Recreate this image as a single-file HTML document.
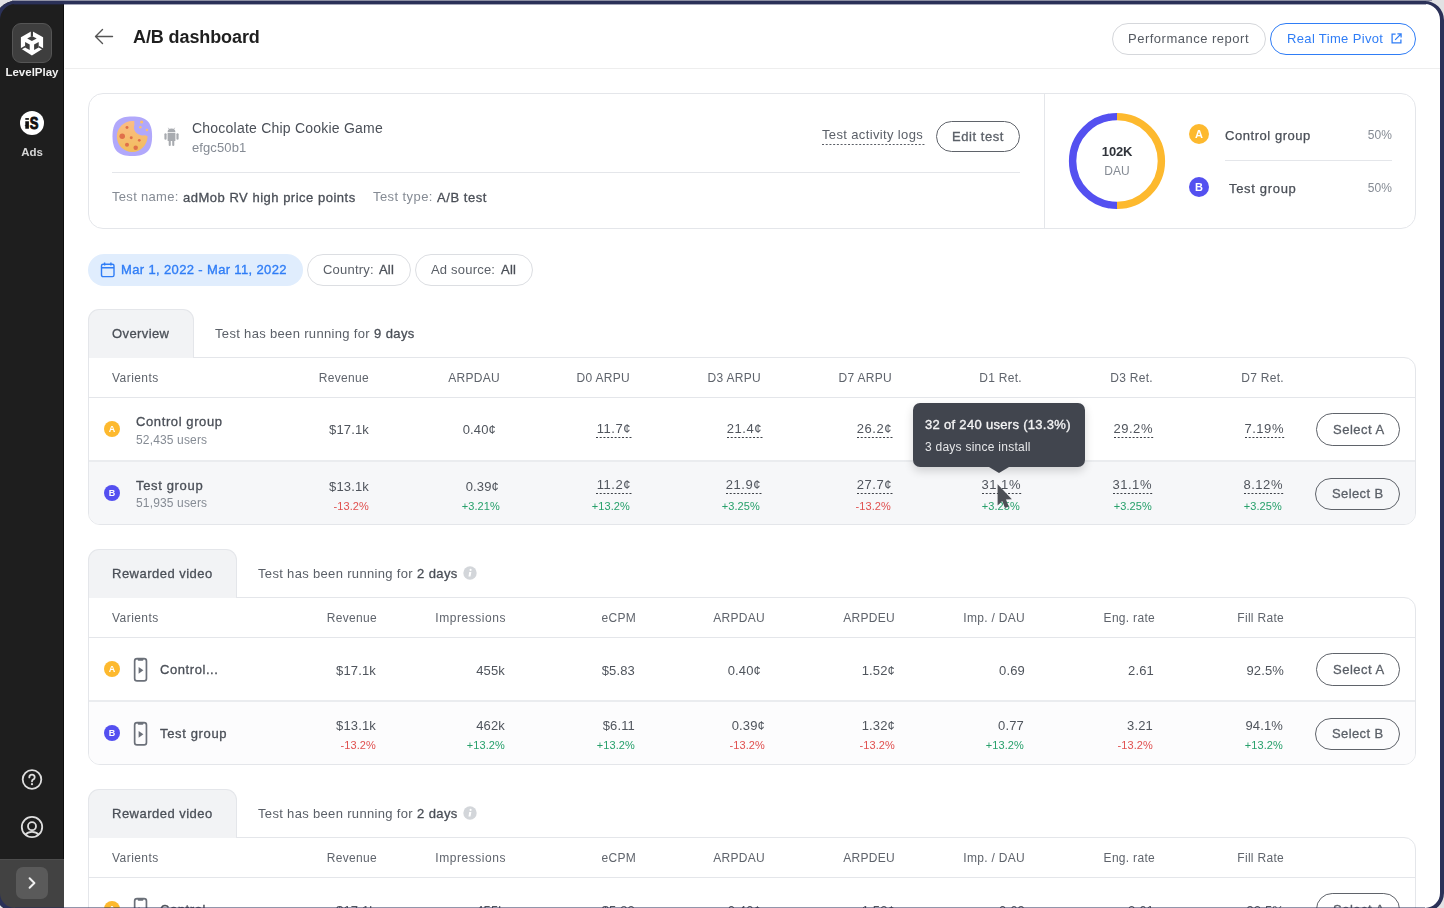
<!DOCTYPE html><html><head><meta charset="utf-8"><style>
html,body{margin:0;padding:0;}
body{width:1444px;height:908px;position:relative;overflow:hidden;background:#fff;font-family:"Liberation Sans", sans-serif;}
.t{position:absolute;white-space:nowrap;line-height:1;will-change:transform;}
.b{position:absolute;box-sizing:border-box;}
svg{position:absolute;overflow:visible;}
</style></head><body>
<div class="b" style="left:0px;top:0px;width:64px;height:908px;background:#1e1e1e;"></div>
<div class="b" style="left:63px;top:0px;width:1px;height:908px;background:#0f0f0f;"></div>
<div class="b" style="left:12px;top:23px;width:40px;height:40px;background:#3e3e3e;border:1px solid #555;border-radius:9px;"></div>
<svg style="left:18px;top:28px" width="28" height="30" viewBox="0 0 28 30">
<path fill="#fff" d="M13.9 3.0 L25.1 9.3 L25.1 20.6 L13.9 27.4 L2.9 20.6 L2.9 9.3 Z"/>
<g fill="#3e3e3e">
<rect x="12.8" y="2" width="2.2" height="6.4"/>
<path d="M13.9 8.1 L18.7 10.6 L13.9 13.0 L9.2 10.6 Z"/>
<path d="M7.1 13.9 L11.7 16.5 L11.7 22.0 L7.1 19.4 Z"/>
<path d="M20.7 13.9 L16.1 16.5 L16.1 22.0 L20.7 19.4 Z"/>
<path d="M2.2 20.4 L7.1 17.7 L7.1 19.4 L3.0 21.7 Z"/>
<path d="M25.6 20.4 L20.7 17.7 L20.7 19.4 L24.8 21.7 Z"/>
</g>
</svg>
<div class="t" style="top:66.77px;font-size:11.5px;font-weight:700;color:#f2f2f2;left:-268.00px;width:600px;text-align:center;">LevelPlay</div>
<div class="b" style="left:20px;top:111px;width:24px;height:24px;border-radius:50%;background:#fff;"></div>
<svg style="left:20px;top:111px" width="24" height="24" viewBox="0 0 24 24">
<g fill="#111">
<rect x="5.3" y="7.1" width="3.6" height="1.7"/>
<path d="M5.3 10.3 L8.9 10.3 L8.9 17.8 L5.3 17.8 L5.3 15.2 L4.6 14.7 L5.3 14.2 Z"/>
</g>
<text x="0" y="0" transform="translate(14.05,18.3) scale(0.8,1)" text-anchor="middle" font-family="Liberation Sans" font-weight="700" font-size="16.3" fill="#111" stroke="#111" stroke-width="0.9">S</text>
</svg>
<div class="t" style="top:146.67px;font-size:11.5px;font-weight:700;color:#d6d6d6;left:-268.00px;width:600px;text-align:center;">Ads</div>
<svg style="left:21px;top:769px" width="22" height="22" viewBox="0 0 22 22">
<circle cx="11" cy="10.5" r="9.3" fill="none" stroke="#dedede" stroke-width="1.8"/>
<path d="M8.3 8.4 Q8.3 5.6 11 5.6 Q13.7 5.6 13.7 8.2 Q13.7 9.8 12 10.6 Q11 11.1 11 12.4" fill="none" stroke="#dedede" stroke-width="1.8" stroke-linecap="round"/>
<circle cx="11" cy="15.2" r="1.1" fill="#dedede"/>
</svg>
<svg style="left:20px;top:815px" width="24" height="24" viewBox="0 0 24 24">
<circle cx="12" cy="12" r="10.2" fill="none" stroke="#dedede" stroke-width="1.8"/>
<circle cx="12" cy="11.2" r="4.0" fill="none" stroke="#dedede" stroke-width="1.8"/>
<path d="M5.0 19.9 Q7.9 16.9 12 16.9 Q16.1 16.9 19.0 19.9" fill="none" stroke="#dedede" stroke-width="1.8"/>
</svg>
<div class="b" style="left:0px;top:859px;width:64px;height:49px;background:#424242;border-top:1px solid #4d4d4d;"></div>
<div class="b" style="left:16px;top:867px;width:32px;height:32px;background:#5a5a5a;border-radius:7px;"></div>
<svg style="left:16px;top:867px" width="32" height="32" viewBox="0 0 32 32">
<path d="M13.6 11.3 L18.4 16 L13.6 20.7" fill="none" stroke="#f0f0f0" stroke-width="2" stroke-linecap="round" stroke-linejoin="round"/>
</svg>
<svg style="left:94px;top:28px" width="20" height="17" viewBox="0 0 20 17">
<path d="M1.5 8.5 L18.5 8.5 M8.5 1.5 L1.5 8.5 L8.5 15.5" fill="none" stroke="#555" stroke-width="1.4" stroke-linecap="round" stroke-linejoin="round"/>
</svg>
<div class="t" style="top:28.26px;font-size:18px;font-weight:700;color:#1f1f1f;letter-spacing:-0.1px;left:132.50px;">A/B dashboard</div>
<div class="b" style="left:65px;top:68px;width:1380px;height:1px;background:#eeeeee;"></div>
<div class="b" style="left:1112px;top:22.5px;width:154px;height:32px;border:1px solid #d5d7db;border-radius:16px;"></div>
<div class="t" style="top:32.00px;font-size:13px;font-weight:400;color:#555a62;letter-spacing:0.5px;left:1128.30px;">Performance report</div>
<div class="b" style="left:1270px;top:22.5px;width:146px;height:32px;border:1px solid #2f7df6;border-radius:16px;"></div>
<div class="t" style="top:31.80px;font-size:13px;font-weight:400;color:#2f7df6;letter-spacing:0.35px;left:1286.50px;">Real Time Pivot</div>
<svg style="left:1390.6px;top:32.6px" width="11" height="11" viewBox="0 0 12 12">
<path d="M5 1.2 L1.2 1.2 L1.2 10.8 L10.8 10.8 L10.8 7" fill="none" stroke="#2f7df6" stroke-width="1.4"/>
<path d="M7 1 L11 1 L11 5 M11 1 L4.5 7.5" fill="none" stroke="#2f7df6" stroke-width="1.4"/>
</svg>
<div class="b" style="left:88px;top:93px;width:1328px;height:136px;border:1px solid #e4e6ea;border-radius:15px;"></div>
<div class="b" style="left:1044px;top:93px;width:1px;height:136px;background:#e4e6ea;"></div>
<svg style="left:111.7px;top:116.3px" width="40.6" height="40.6" viewBox="0 0 40 40">
<path d="M20 0.5 C34 0.5 39.5 6 39.5 20 C39.5 34 34 39.5 20 39.5 C6 39.5 0.5 34 0.5 20 C0.5 6 6 0.5 20 0.5 Z" fill="#b1a8fb"/><g transform="translate(20,20.2) scale(1.045) translate(-20,-20)">
<defs><linearGradient id="ck" x1="0" y1="0" x2="0" y2="1"><stop offset="0" stop-color="#fbbd86"/><stop offset="1" stop-color="#f2bd5c"/></linearGradient></defs>
<path d="M22 5.3 C21.4 7 22.5 8.2 21.8 9.8 C21 11.8 22 15 24 16.8 C26 18.6 29 19.4 31 18.8 C32.8 18.4 34 19.6 34.4 19.8 C34.4 28 28 34.6 20 34.6 C12 34.6 5.4 28 5.4 20 C5.4 12 12 5.3 20 5.3 Z" fill="url(#ck)"/>
<circle cx="10.5" cy="19.8" r="2.6" fill="#e0704a"/><circle cx="15" cy="11.6" r="1.4" fill="#e0704a"/>
<circle cx="19" cy="21.2" r="1.4" fill="#e0704a"/><circle cx="15" cy="27.8" r="1.9" fill="#e0704a"/>
<circle cx="23.2" cy="30.6" r="2.1" fill="#e0704a"/><circle cx="26.6" cy="23.6" r="1.3" fill="#e0704a"/>
<circle cx="28.8" cy="6.3" r="1.5" fill="#fbbe6e"/><circle cx="27.6" cy="11.3" r="1.2" fill="#fbbe6e"/><circle cx="33.8" cy="13.8" r="1.2" fill="#fbbe6e"/>
</g></svg>
<svg style="left:164px;top:127px" width="15" height="19" viewBox="0 0 15 19">
<g fill="#a8abb0">
<path d="M3.6 5.2 A3.9 3.6 0 0 1 11.4 5.2 Z"/>
<rect x="3.6" y="6" width="7.8" height="8" rx="0.6"/>
<rect x="0.4" y="6.2" width="2.2" height="6.6" rx="1.1"/><rect x="12.4" y="6.2" width="2.2" height="6.6" rx="1.1"/>
<rect x="4.7" y="13" width="2.1" height="5.9" rx="1"/><rect x="8.2" y="13" width="2.1" height="5.9" rx="1"/>
<path d="M4.3 0.8 L5.4 2.6 M10.7 0.8 L9.6 2.6" stroke="#a8abb0" stroke-width="0.7"/>
</g></svg>
<div class="t" style="top:120.75px;font-size:14px;font-weight:400;color:#4a4f57;letter-spacing:0.22px;left:191.50px;">Chocolate Chip Cookie Game</div>
<div class="t" style="top:140.50px;font-size:13px;font-weight:400;color:#858b94;letter-spacing:0.1px;left:191.80px;">efgc50b1</div>
<div class="t" style="top:128.40px;font-size:13px;font-weight:400;color:#5b6068;letter-spacing:0.36px;left:821.50px;">Test activity logs</div>
<svg style="left:821.50px;top:144.00px" width="104.00" height="1" viewBox="0 0 104.00 1"><line x1="0" y1="0.5" x2="104.00" y2="0.5" stroke="#5a5e66" stroke-width="1" stroke-dasharray="2 1.72"/></svg>
<div class="b" style="left:936px;top:120.5px;width:84px;height:31.8px;border:1px solid #5f636a;border-radius:16px;"></div>
<div class="t" style="top:129.90px;font-size:13px;font-weight:400;color:#5b6068;letter-spacing:0.556px;left:952.40px;-webkit-text-stroke:0.3px #5b6068;">Edit test</div>
<div class="b" style="left:112px;top:172px;width:908px;height:1px;background:#e4e6ea;"></div>
<div class="t" style="top:190.20px;font-size:13px;font-weight:400;color:#858b94;letter-spacing:0.3px;left:111.50px;">Test name:</div>
<div class="t" style="top:190.50px;font-size:13px;font-weight:400;color:#4a4f57;letter-spacing:0.51px;left:183.30px;-webkit-text-stroke:0.3px #4a4f57;">adMob RV high price points</div>
<div class="t" style="top:190.20px;font-size:13px;font-weight:400;color:#858b94;letter-spacing:0.42px;left:373.20px;">Test type:</div>
<div class="t" style="top:190.50px;font-size:13px;font-weight:400;color:#4a4f57;letter-spacing:0.557px;left:437.00px;-webkit-text-stroke:0.3px #4a4f57;">A/B test</div>
<svg style="left:1068px;top:112px" width="98" height="98" viewBox="0 0 98 98">
<path d="M49 4.6 A44.4 44.4 0 0 1 49 93.4" fill="none" stroke="#fdb92e" stroke-width="7.4"/>
<path d="M49 93.4 A44.4 44.4 0 0 1 49 4.6" fill="none" stroke="#5450f0" stroke-width="7.4"/>
</svg>
<div class="t" style="top:145.00px;font-size:13px;font-weight:700;color:#30343b;letter-spacing:-0.2px;left:817.00px;width:600px;text-align:center;">102K</div>
<div class="t" style="top:164.84px;font-size:12px;font-weight:400;color:#858b94;left:817.00px;width:600px;text-align:center;">DAU</div>
<div class="b" style="left:1189px;top:124.19999999999999px;width:20px;height:20px;border-radius:50%;background:#fdb92e;"></div>
<div class="t" style="top:129.09px;font-size:11px;font-weight:700;color:#fff;left:899.00px;width:600px;text-align:center;">A</div>
<div class="t" style="top:128.70px;font-size:13px;font-weight:400;color:#4a4f57;letter-spacing:0.546px;left:1225.40px;-webkit-text-stroke:0.25px #4a4f57;">Control group</div>
<div class="t" style="top:128.54px;font-size:12px;font-weight:400;color:#858b94;letter-spacing:0.1px;left:791.50px;width:600px;text-align:right;margin-right:-0.1px;">50%</div>
<div class="b" style="left:1189px;top:177.3px;width:20px;height:20px;border-radius:50%;background:#5450f0;"></div>
<div class="t" style="top:182.19px;font-size:11px;font-weight:700;color:#fff;left:899.00px;width:600px;text-align:center;">B</div>
<div class="t" style="top:181.70px;font-size:13px;font-weight:400;color:#4a4f57;letter-spacing:0.678px;left:1229.40px;-webkit-text-stroke:0.25px #4a4f57;">Test group</div>
<div class="t" style="top:181.54px;font-size:12px;font-weight:400;color:#858b94;letter-spacing:0.1px;left:791.50px;width:600px;text-align:right;margin-right:-0.1px;">50%</div>
<div class="b" style="left:1225px;top:160px;width:167px;height:1px;background:#e4e6ea;"></div>
<div class="b" style="left:88px;top:253.5px;width:215px;height:32px;background:#e0edfd;border-radius:16px;"></div>
<svg style="left:100px;top:262px" width="16" height="16" viewBox="0 0 16 16">
<rect x="1.5" y="2.2" width="12.5" height="12.4" rx="1.6" fill="none" stroke="#2f7df6" stroke-width="1.4"/>
<path d="M1.5 5.8 L14 5.8 M4.6 0.6 L4.6 3.4 M10.9 0.6 L10.9 3.4" stroke="#2f7df6" stroke-width="1.4"/>
</svg>
<div class="t" style="top:263.30px;font-size:13px;font-weight:400;color:#2f7df6;letter-spacing:0.358px;left:120.50px;-webkit-text-stroke:0.35px #2f7df6;">Mar 1, 2022 - Mar 11, 2022</div>
<div class="b" style="left:307px;top:253.5px;width:104px;height:32px;border:1px solid #dcdee2;border-radius:16px;"></div>
<div class="t" style="top:263.30px;font-size:13px;font-weight:400;color:#5b6068;letter-spacing:0.2px;left:323.00px;">Country:</div>
<div class="t" style="top:263.30px;font-size:13px;font-weight:400;color:#4a4f57;letter-spacing:0.175px;left:379.40px;-webkit-text-stroke:0.3px #4a4f57;">All</div>
<div class="b" style="left:415px;top:253.5px;width:118px;height:32px;border:1px solid #dcdee2;border-radius:16px;"></div>
<div class="t" style="top:263.30px;font-size:13px;font-weight:400;color:#5b6068;letter-spacing:0.2px;left:431.00px;">Ad source:</div>
<div class="t" style="top:263.30px;font-size:13px;font-weight:400;color:#4a4f57;letter-spacing:0.275px;left:501.00px;-webkit-text-stroke:0.3px #4a4f57;">All</div>
<div class="b" style="left:88px;top:357.0px;width:1328px;height:168px;border:1px solid #e4e6ea;border-radius:0 12px 12px 12px;overflow:hidden;"><div style="position:absolute;left:0;right:0;top:103px;bottom:0;background:#f6f7f9;"></div></div>
<div class="b" style="left:88px;top:309px;width:106px;height:49.0px;background:#f2f3f5;border:1px solid #e4e6ea;border-bottom:none;border-radius:11px 11px 0 0;"></div>
<div class="t" style="top:327.20px;font-size:13px;font-weight:400;color:#4a4f57;letter-spacing:0.393px;left:112.00px;-webkit-text-stroke:0.3px #4a4f57;">Overview</div>
<div class="t" style="top:327.30px;font-size:13px;font-weight:400;color:#5b6068;letter-spacing:0.33px;left:215.30px;">Test has been running for</div>
<div class="t" style="top:327.30px;font-size:13px;font-weight:400;color:#4a4f57;letter-spacing:0.4px;left:374.20px;-webkit-text-stroke:0.3px #4a4f57;">9 days</div>
<div class="t" style="top:372.04px;font-size:12px;font-weight:400;color:#5f646c;letter-spacing:0.45px;left:111.80px;">Varients</div>
<div class="t" style="top:372.04px;font-size:12px;font-weight:400;color:#5f646c;letter-spacing:0.3px;left:-230.70px;width:600px;text-align:right;margin-right:-0.3px;">Revenue</div>
<div class="t" style="top:372.04px;font-size:12px;font-weight:400;color:#5f646c;letter-spacing:0.3px;left:-100.10px;width:600px;text-align:right;margin-right:-0.3px;">ARPDAU</div>
<div class="t" style="top:372.04px;font-size:12px;font-weight:400;color:#5f646c;letter-spacing:0.3px;left:30.20px;width:600px;text-align:right;margin-right:-0.3px;">D0 ARPU</div>
<div class="t" style="top:372.04px;font-size:12px;font-weight:400;color:#5f646c;letter-spacing:0.3px;left:160.90px;width:600px;text-align:right;margin-right:-0.3px;">D3 ARPU</div>
<div class="t" style="top:372.04px;font-size:12px;font-weight:400;color:#5f646c;letter-spacing:0.3px;left:291.70px;width:600px;text-align:right;margin-right:-0.3px;">D7 ARPU</div>
<div class="t" style="top:372.04px;font-size:12px;font-weight:400;color:#5f646c;letter-spacing:0.3px;left:422.40px;width:600px;text-align:right;margin-right:-0.3px;">D1 Ret.</div>
<div class="t" style="top:372.04px;font-size:12px;font-weight:400;color:#5f646c;letter-spacing:0.3px;left:553.30px;width:600px;text-align:right;margin-right:-0.3px;">D3 Ret.</div>
<div class="t" style="top:372.04px;font-size:12px;font-weight:400;color:#5f646c;letter-spacing:0.3px;left:684.20px;width:600px;text-align:right;margin-right:-0.3px;">D7 Ret.</div>
<div class="b" style="left:89px;top:396.5px;width:1326px;height:1.5px;background:#e4e6ea;"></div>
<div class="b" style="left:89px;top:460px;width:1326px;height:1.5px;background:#eaecef;"></div>
<div class="b" style="left:104.0px;top:421.3px;width:16px;height:16px;border-radius:50%;background:#fdb92e;"></div>
<div class="t" style="top:424.92px;font-size:9px;font-weight:700;color:#fff;left:-188.00px;width:600px;text-align:center;">A</div>
<div class="t" style="top:414.80px;font-size:13px;font-weight:400;color:#4a4f57;letter-spacing:0.604px;left:136.30px;-webkit-text-stroke:0.3px #4a4f57;">Control group</div>
<div class="t" style="top:433.54px;font-size:12px;font-weight:400;color:#858b94;letter-spacing:0.15px;left:136.00px;">52,435 users</div>
<div class="b" style="left:104.0px;top:485.0px;width:16px;height:16px;border-radius:50%;background:#5450f0;"></div>
<div class="t" style="top:488.62px;font-size:9px;font-weight:700;color:#fff;left:-188.00px;width:600px;text-align:center;">B</div>
<div class="t" style="top:478.50px;font-size:13px;font-weight:400;color:#4a4f57;letter-spacing:0.656px;left:136.30px;-webkit-text-stroke:0.3px #4a4f57;">Test group</div>
<div class="t" style="top:497.44px;font-size:12px;font-weight:400;color:#858b94;letter-spacing:0.15px;left:136.00px;">51,935 users</div>
<div class="t" style="top:423.40px;font-size:13px;font-weight:400;color:#50555d;letter-spacing:0.15px;left:-231.40px;width:600px;text-align:right;margin-right:-0.15px;">$17.1k</div>
<div class="t" style="top:423.40px;font-size:13px;font-weight:400;color:#50555d;letter-spacing:0.15px;left:-104.50px;width:600px;text-align:right;margin-right:-0.15px;">0.40¢</div>
<div class="t" style="top:421.60px;font-size:13px;font-weight:400;color:#50555d;letter-spacing:0.55px;left:30.95px;width:600px;text-align:right;margin-right:-0.55px;">11.7¢</div>
<svg style="left:595.90px;top:437.00px" width="36.00" height="1" viewBox="0 0 36.00 1"><line x1="0" y1="0.5" x2="36.00" y2="0.5" stroke="#3d4148" stroke-width="1" stroke-dasharray="2 1.72"/></svg>
<div class="t" style="top:421.60px;font-size:13px;font-weight:400;color:#50555d;letter-spacing:0.55px;left:161.75px;width:600px;text-align:right;margin-right:-0.55px;">21.4¢</div>
<svg style="left:726.70px;top:437.00px" width="36.00" height="1" viewBox="0 0 36.00 1"><line x1="0" y1="0.5" x2="36.00" y2="0.5" stroke="#3d4148" stroke-width="1" stroke-dasharray="2 1.72"/></svg>
<div class="t" style="top:421.60px;font-size:13px;font-weight:400;color:#50555d;letter-spacing:0.55px;left:292.25px;width:600px;text-align:right;margin-right:-0.55px;">26.2¢</div>
<svg style="left:857.20px;top:437.00px" width="36.00" height="1" viewBox="0 0 36.00 1"><line x1="0" y1="0.5" x2="36.00" y2="0.5" stroke="#3d4148" stroke-width="1" stroke-dasharray="2 1.72"/></svg>
<div class="t" style="top:421.60px;font-size:13px;font-weight:400;color:#50555d;letter-spacing:0.55px;left:422.75px;width:600px;text-align:right;margin-right:-0.55px;">13.3%</div>
<svg style="left:983.70px;top:437.00px" width="40.00" height="1" viewBox="0 0 40.00 1"><line x1="0" y1="0.5" x2="40.00" y2="0.5" stroke="#3d4148" stroke-width="1" stroke-dasharray="2 1.72"/></svg>
<div class="t" style="top:421.60px;font-size:13px;font-weight:400;color:#50555d;letter-spacing:0.55px;left:553.05px;width:600px;text-align:right;margin-right:-0.55px;">29.2%</div>
<svg style="left:1114.00px;top:437.00px" width="40.00" height="1" viewBox="0 0 40.00 1"><line x1="0" y1="0.5" x2="40.00" y2="0.5" stroke="#3d4148" stroke-width="1" stroke-dasharray="2 1.72"/></svg>
<div class="t" style="top:421.60px;font-size:13px;font-weight:400;color:#50555d;letter-spacing:0.55px;left:683.55px;width:600px;text-align:right;margin-right:-0.55px;">7.19%</div>
<svg style="left:1244.50px;top:437.00px" width="40.00" height="1" viewBox="0 0 40.00 1"><line x1="0" y1="0.5" x2="40.00" y2="0.5" stroke="#3d4148" stroke-width="1" stroke-dasharray="2 1.72"/></svg>
<div class="t" style="top:479.50px;font-size:13px;font-weight:400;color:#50555d;letter-spacing:0.15px;left:-231.40px;width:600px;text-align:right;margin-right:-0.15px;">$13.1k</div>
<div class="t" style="top:500.79px;font-size:11px;font-weight:400;color:#e0504f;letter-spacing:0.12px;left:-231.30px;width:600px;text-align:right;margin-right:-0.12px;">-13.2%</div>
<div class="t" style="top:479.50px;font-size:13px;font-weight:400;color:#50555d;letter-spacing:0.15px;left:-100.60px;width:600px;text-align:right;margin-right:-0.15px;">0.39¢</div>
<div class="t" style="top:500.79px;font-size:11px;font-weight:400;color:#27a06b;letter-spacing:0.12px;left:-100.50px;width:600px;text-align:right;margin-right:-0.12px;">+3.21%</div>
<div class="t" style="top:477.60px;font-size:13px;font-weight:400;color:#50555d;letter-spacing:0.55px;left:30.95px;width:600px;text-align:right;margin-right:-0.55px;">11.2¢</div>
<svg style="left:595.90px;top:493.00px" width="36.00" height="1" viewBox="0 0 36.00 1"><line x1="0" y1="0.5" x2="36.00" y2="0.5" stroke="#3d4148" stroke-width="1" stroke-dasharray="2 1.72"/></svg>
<div class="t" style="top:500.79px;font-size:11px;font-weight:400;color:#27a06b;letter-spacing:0.12px;left:30.20px;width:600px;text-align:right;margin-right:-0.12px;">+13.2%</div>
<div class="t" style="top:477.60px;font-size:13px;font-weight:400;color:#50555d;letter-spacing:0.55px;left:161.05px;width:600px;text-align:right;margin-right:-0.55px;">21.9¢</div>
<svg style="left:726.00px;top:493.00px" width="36.00" height="1" viewBox="0 0 36.00 1"><line x1="0" y1="0.5" x2="36.00" y2="0.5" stroke="#3d4148" stroke-width="1" stroke-dasharray="2 1.72"/></svg>
<div class="t" style="top:500.79px;font-size:11px;font-weight:400;color:#27a06b;letter-spacing:0.12px;left:160.30px;width:600px;text-align:right;margin-right:-0.12px;">+3.25%</div>
<div class="t" style="top:477.60px;font-size:13px;font-weight:400;color:#50555d;letter-spacing:0.55px;left:291.95px;width:600px;text-align:right;margin-right:-0.55px;">27.7¢</div>
<svg style="left:856.90px;top:493.00px" width="36.00" height="1" viewBox="0 0 36.00 1"><line x1="0" y1="0.5" x2="36.00" y2="0.5" stroke="#3d4148" stroke-width="1" stroke-dasharray="2 1.72"/></svg>
<div class="t" style="top:500.79px;font-size:11px;font-weight:400;color:#e0504f;letter-spacing:0.12px;left:291.20px;width:600px;text-align:right;margin-right:-0.12px;">-13.2%</div>
<div class="t" style="top:477.60px;font-size:13px;font-weight:400;color:#50555d;letter-spacing:0.55px;left:421.15px;width:600px;text-align:right;margin-right:-0.55px;">31.1%</div>
<svg style="left:982.10px;top:493.00px" width="40.00" height="1" viewBox="0 0 40.00 1"><line x1="0" y1="0.5" x2="40.00" y2="0.5" stroke="#3d4148" stroke-width="1" stroke-dasharray="2 1.72"/></svg>
<div class="t" style="top:500.79px;font-size:11px;font-weight:400;color:#27a06b;letter-spacing:0.12px;left:420.40px;width:600px;text-align:right;margin-right:-0.12px;">+3.25%</div>
<div class="t" style="top:477.60px;font-size:13px;font-weight:400;color:#50555d;letter-spacing:0.55px;left:552.35px;width:600px;text-align:right;margin-right:-0.55px;">31.1%</div>
<svg style="left:1113.30px;top:493.00px" width="40.00" height="1" viewBox="0 0 40.00 1"><line x1="0" y1="0.5" x2="40.00" y2="0.5" stroke="#3d4148" stroke-width="1" stroke-dasharray="2 1.72"/></svg>
<div class="t" style="top:500.79px;font-size:11px;font-weight:400;color:#27a06b;letter-spacing:0.12px;left:551.60px;width:600px;text-align:right;margin-right:-0.12px;">+3.25%</div>
<div class="t" style="top:477.60px;font-size:13px;font-weight:400;color:#50555d;letter-spacing:0.55px;left:682.55px;width:600px;text-align:right;margin-right:-0.55px;">8.12%</div>
<svg style="left:1243.50px;top:493.00px" width="40.00" height="1" viewBox="0 0 40.00 1"><line x1="0" y1="0.5" x2="40.00" y2="0.5" stroke="#3d4148" stroke-width="1" stroke-dasharray="2 1.72"/></svg>
<div class="t" style="top:500.79px;font-size:11px;font-weight:400;color:#27a06b;letter-spacing:0.12px;left:681.80px;width:600px;text-align:right;margin-right:-0.12px;">+3.25%</div>
<div class="b" style="left:1316px;top:413.4px;width:84px;height:32.4px;border:1px solid #5f636a;border-radius:16.2px;"></div>
<div class="t" style="top:423.20px;font-size:13px;font-weight:400;color:#5b6068;letter-spacing:0.5px;left:1332.60px;-webkit-text-stroke:0.3px #5b6068;">Select A</div>
<div class="b" style="left:1315px;top:477.5px;width:85px;height:32.4px;border:1px solid #5f636a;border-radius:16.2px;"></div>
<div class="t" style="top:487.30px;font-size:13px;font-weight:400;color:#5b6068;letter-spacing:0.4px;left:1331.80px;-webkit-text-stroke:0.3px #5b6068;">Select B</div>
<div class="b" style="left:88px;top:597.0px;width:1328px;height:168px;border:1px solid #e4e6ea;border-radius:0 12px 12px 12px;overflow:hidden;"><div style="position:absolute;left:0;right:0;top:103px;bottom:0;background:#fcfcfd;"></div></div>
<div class="b" style="left:88px;top:549px;width:149px;height:49.0px;background:#f2f3f5;border:1px solid #e4e6ea;border-bottom:none;border-radius:11px 11px 0 0;"></div>
<div class="t" style="top:567.20px;font-size:13px;font-weight:400;color:#4a4f57;letter-spacing:0.488px;left:112.00px;-webkit-text-stroke:0.3px #4a4f57;">Rewarded video</div>
<div class="t" style="top:567.30px;font-size:13px;font-weight:400;color:#5b6068;letter-spacing:0.33px;left:258.30px;">Test has been running for</div>
<div class="t" style="top:567.30px;font-size:13px;font-weight:400;color:#4a4f57;letter-spacing:0.4px;left:417.20px;-webkit-text-stroke:0.3px #4a4f57;">2 days</div>
<svg style="left:463.0px;top:566.4px" width="14" height="14" viewBox="0 0 14 14"><circle cx="7" cy="7" r="6.7" fill="#d3d6da"/><circle cx="7.6" cy="3.9" r="1.05" fill="#fff"/><path d="M6.2 6.1 L8.4 6.1 L7.5 10.6 L5.5 10.6 Z" fill="#fff"/></svg>
<div class="t" style="top:612.04px;font-size:12px;font-weight:400;color:#5f646c;letter-spacing:0.45px;left:111.80px;">Varients</div>
<div class="t" style="top:612.04px;font-size:12px;font-weight:400;color:#5f646c;letter-spacing:0.3px;left:-223.50px;width:600px;text-align:right;margin-right:-0.3px;">Revenue</div>
<div class="t" style="top:612.04px;font-size:12px;font-weight:400;color:#5f646c;letter-spacing:0.55px;left:-93.65px;width:600px;text-align:right;margin-right:-0.55px;">Impressions</div>
<div class="t" style="top:612.04px;font-size:12px;font-weight:400;color:#5f646c;letter-spacing:0.3px;left:35.50px;width:600px;text-align:right;margin-right:-0.3px;">eCPM</div>
<div class="t" style="top:612.04px;font-size:12px;font-weight:400;color:#5f646c;letter-spacing:0.3px;left:165.40px;width:600px;text-align:right;margin-right:-0.3px;">ARPDAU</div>
<div class="t" style="top:612.04px;font-size:12px;font-weight:400;color:#5f646c;letter-spacing:0.3px;left:295.10px;width:600px;text-align:right;margin-right:-0.3px;">ARPDEU</div>
<div class="t" style="top:612.04px;font-size:12px;font-weight:400;color:#5f646c;letter-spacing:0.3px;left:424.80px;width:600px;text-align:right;margin-right:-0.3px;">Imp. / DAU</div>
<div class="t" style="top:612.04px;font-size:12px;font-weight:400;color:#5f646c;letter-spacing:0.3px;left:554.50px;width:600px;text-align:right;margin-right:-0.3px;">Eng. rate</div>
<div class="t" style="top:612.04px;font-size:12px;font-weight:400;color:#5f646c;letter-spacing:0.3px;left:684.20px;width:600px;text-align:right;margin-right:-0.3px;">Fill Rate</div>
<div class="b" style="left:89px;top:636.5px;width:1326px;height:1.5px;background:#e4e6ea;"></div>
<div class="b" style="left:89px;top:700px;width:1326px;height:1.5px;background:#eaecef;"></div>
<div class="b" style="left:104.0px;top:661.3px;width:16px;height:16px;border-radius:50%;background:#fdb92e;"></div>
<div class="t" style="top:664.92px;font-size:9px;font-weight:700;color:#fff;left:-188.00px;width:600px;text-align:center;">A</div>
<svg style="left:132.5px;top:656.5px" width="15" height="26" viewBox="0 0 15 26">
<rect x="1.65" y="1.55" width="11.8" height="22.3" rx="2.4" fill="none" stroke="#6b7079" stroke-width="1.7"/>
<path d="M4.2 1.5 L10.9 1.5 L10.4 3.1 Q10.2 3.7 9.6 3.7 L5.5 3.7 Q4.9 3.7 4.7 3.1 Z" fill="#6b7079"/>
<path d="M5.6 9.9 L10.4 13.35 L5.6 16.8 Z" fill="#6b7079"/>
</svg>
<div class="t" style="top:663.40px;font-size:13px;font-weight:400;color:#4a4f57;letter-spacing:0.572px;left:160.10px;-webkit-text-stroke:0.3px #4a4f57;">Control...</div>
<div class="b" style="left:104.0px;top:725.3px;width:16px;height:16px;border-radius:50%;background:#5450f0;"></div>
<div class="t" style="top:728.92px;font-size:9px;font-weight:700;color:#fff;left:-188.00px;width:600px;text-align:center;">B</div>
<svg style="left:132.5px;top:720.5px" width="15" height="26" viewBox="0 0 15 26">
<rect x="1.65" y="1.55" width="11.8" height="22.3" rx="2.4" fill="none" stroke="#6b7079" stroke-width="1.7"/>
<path d="M4.2 1.5 L10.9 1.5 L10.4 3.1 Q10.2 3.7 9.6 3.7 L5.5 3.7 Q4.9 3.7 4.7 3.1 Z" fill="#6b7079"/>
<path d="M5.6 9.9 L10.4 13.35 L5.6 16.8 Z" fill="#6b7079"/>
</svg>
<div class="t" style="top:727.20px;font-size:13px;font-weight:400;color:#4a4f57;letter-spacing:0.644px;left:160.10px;-webkit-text-stroke:0.3px #4a4f57;">Test group</div>
<div class="t" style="top:663.60px;font-size:13px;font-weight:400;color:#50555d;letter-spacing:0.15px;left:-224.30px;width:600px;text-align:right;margin-right:-0.15px;">$17.1k</div>
<div class="t" style="top:663.60px;font-size:13px;font-weight:400;color:#50555d;letter-spacing:0.15px;left:-94.70px;width:600px;text-align:right;margin-right:-0.15px;">455k</div>
<div class="t" style="top:663.60px;font-size:13px;font-weight:400;color:#50555d;letter-spacing:0.15px;left:34.90px;width:600px;text-align:right;margin-right:-0.15px;">$5.83</div>
<div class="t" style="top:663.60px;font-size:13px;font-weight:400;color:#50555d;letter-spacing:0.15px;left:161.40px;width:600px;text-align:right;margin-right:-0.15px;">0.40¢</div>
<div class="t" style="top:663.60px;font-size:13px;font-weight:400;color:#50555d;letter-spacing:0.15px;left:295.20px;width:600px;text-align:right;margin-right:-0.15px;">1.52¢</div>
<div class="t" style="top:663.60px;font-size:13px;font-weight:400;color:#50555d;letter-spacing:0.15px;left:424.50px;width:600px;text-align:right;margin-right:-0.15px;">0.69</div>
<div class="t" style="top:663.60px;font-size:13px;font-weight:400;color:#50555d;letter-spacing:0.15px;left:553.60px;width:600px;text-align:right;margin-right:-0.15px;">2.61</div>
<div class="t" style="top:663.60px;font-size:13px;font-weight:400;color:#50555d;letter-spacing:0.15px;left:683.80px;width:600px;text-align:right;margin-right:-0.15px;">92.5%</div>
<div class="t" style="top:719.30px;font-size:13px;font-weight:400;color:#50555d;letter-spacing:0.15px;left:-224.30px;width:600px;text-align:right;margin-right:-0.15px;">$13.1k</div>
<div class="t" style="top:740.09px;font-size:11px;font-weight:400;color:#e0504f;letter-spacing:0.12px;left:-224.20px;width:600px;text-align:right;margin-right:-0.12px;">-13.2%</div>
<div class="t" style="top:719.30px;font-size:13px;font-weight:400;color:#50555d;letter-spacing:0.15px;left:-94.70px;width:600px;text-align:right;margin-right:-0.15px;">462k</div>
<div class="t" style="top:740.09px;font-size:11px;font-weight:400;color:#27a06b;letter-spacing:0.12px;left:-94.60px;width:600px;text-align:right;margin-right:-0.12px;">+13.2%</div>
<div class="t" style="top:719.30px;font-size:13px;font-weight:400;color:#50555d;letter-spacing:0.15px;left:34.60px;width:600px;text-align:right;margin-right:-0.15px;">$6.11</div>
<div class="t" style="top:740.09px;font-size:11px;font-weight:400;color:#27a06b;letter-spacing:0.12px;left:34.70px;width:600px;text-align:right;margin-right:-0.12px;">+13.2%</div>
<div class="t" style="top:719.30px;font-size:13px;font-weight:400;color:#50555d;letter-spacing:0.15px;left:164.60px;width:600px;text-align:right;margin-right:-0.15px;">0.39¢</div>
<div class="t" style="top:740.09px;font-size:11px;font-weight:400;color:#e0504f;letter-spacing:0.12px;left:164.70px;width:600px;text-align:right;margin-right:-0.12px;">-13.2%</div>
<div class="t" style="top:719.30px;font-size:13px;font-weight:400;color:#50555d;letter-spacing:0.15px;left:294.60px;width:600px;text-align:right;margin-right:-0.15px;">1.32¢</div>
<div class="t" style="top:740.09px;font-size:11px;font-weight:400;color:#e0504f;letter-spacing:0.12px;left:294.70px;width:600px;text-align:right;margin-right:-0.12px;">-13.2%</div>
<div class="t" style="top:719.30px;font-size:13px;font-weight:400;color:#50555d;letter-spacing:0.15px;left:423.80px;width:600px;text-align:right;margin-right:-0.15px;">0.77</div>
<div class="t" style="top:740.09px;font-size:11px;font-weight:400;color:#27a06b;letter-spacing:0.12px;left:423.90px;width:600px;text-align:right;margin-right:-0.12px;">+13.2%</div>
<div class="t" style="top:719.30px;font-size:13px;font-weight:400;color:#50555d;letter-spacing:0.15px;left:552.90px;width:600px;text-align:right;margin-right:-0.15px;">3.21</div>
<div class="t" style="top:740.09px;font-size:11px;font-weight:400;color:#e0504f;letter-spacing:0.12px;left:553.00px;width:600px;text-align:right;margin-right:-0.12px;">-13.2%</div>
<div class="t" style="top:719.30px;font-size:13px;font-weight:400;color:#50555d;letter-spacing:0.15px;left:682.80px;width:600px;text-align:right;margin-right:-0.15px;">94.1%</div>
<div class="t" style="top:740.09px;font-size:11px;font-weight:400;color:#27a06b;letter-spacing:0.12px;left:682.90px;width:600px;text-align:right;margin-right:-0.12px;">+13.2%</div>
<div class="b" style="left:1316px;top:653.4000000000001px;width:84px;height:32.4px;border:1px solid #5f636a;border-radius:16.2px;"></div>
<div class="t" style="top:663.20px;font-size:13px;font-weight:400;color:#5b6068;letter-spacing:0.5px;left:1332.60px;-webkit-text-stroke:0.3px #5b6068;">Select A</div>
<div class="b" style="left:1315px;top:717.5px;width:85px;height:32.4px;border:1px solid #5f636a;border-radius:16.2px;"></div>
<div class="t" style="top:727.30px;font-size:13px;font-weight:400;color:#5b6068;letter-spacing:0.4px;left:1331.80px;-webkit-text-stroke:0.3px #5b6068;">Select B</div>
<div class="b" style="left:88px;top:837.0px;width:1328px;height:168px;border:1px solid #e4e6ea;border-radius:0 12px 12px 12px;overflow:hidden;"><div style="position:absolute;left:0;right:0;top:103px;bottom:0;background:#fcfcfd;"></div></div>
<div class="b" style="left:88px;top:789px;width:149px;height:49.0px;background:#f2f3f5;border:1px solid #e4e6ea;border-bottom:none;border-radius:11px 11px 0 0;"></div>
<div class="t" style="top:807.20px;font-size:13px;font-weight:400;color:#4a4f57;letter-spacing:0.488px;left:112.00px;-webkit-text-stroke:0.3px #4a4f57;">Rewarded video</div>
<div class="t" style="top:807.30px;font-size:13px;font-weight:400;color:#5b6068;letter-spacing:0.33px;left:258.30px;">Test has been running for</div>
<div class="t" style="top:807.30px;font-size:13px;font-weight:400;color:#4a4f57;letter-spacing:0.4px;left:417.20px;-webkit-text-stroke:0.3px #4a4f57;">2 days</div>
<svg style="left:463.0px;top:806.4px" width="14" height="14" viewBox="0 0 14 14"><circle cx="7" cy="7" r="6.7" fill="#d3d6da"/><circle cx="7.6" cy="3.9" r="1.05" fill="#fff"/><path d="M6.2 6.1 L8.4 6.1 L7.5 10.6 L5.5 10.6 Z" fill="#fff"/></svg>
<div class="t" style="top:852.04px;font-size:12px;font-weight:400;color:#5f646c;letter-spacing:0.45px;left:111.80px;">Varients</div>
<div class="t" style="top:852.04px;font-size:12px;font-weight:400;color:#5f646c;letter-spacing:0.3px;left:-223.50px;width:600px;text-align:right;margin-right:-0.3px;">Revenue</div>
<div class="t" style="top:852.04px;font-size:12px;font-weight:400;color:#5f646c;letter-spacing:0.55px;left:-93.65px;width:600px;text-align:right;margin-right:-0.55px;">Impressions</div>
<div class="t" style="top:852.04px;font-size:12px;font-weight:400;color:#5f646c;letter-spacing:0.3px;left:35.50px;width:600px;text-align:right;margin-right:-0.3px;">eCPM</div>
<div class="t" style="top:852.04px;font-size:12px;font-weight:400;color:#5f646c;letter-spacing:0.3px;left:165.40px;width:600px;text-align:right;margin-right:-0.3px;">ARPDAU</div>
<div class="t" style="top:852.04px;font-size:12px;font-weight:400;color:#5f646c;letter-spacing:0.3px;left:295.10px;width:600px;text-align:right;margin-right:-0.3px;">ARPDEU</div>
<div class="t" style="top:852.04px;font-size:12px;font-weight:400;color:#5f646c;letter-spacing:0.3px;left:424.80px;width:600px;text-align:right;margin-right:-0.3px;">Imp. / DAU</div>
<div class="t" style="top:852.04px;font-size:12px;font-weight:400;color:#5f646c;letter-spacing:0.3px;left:554.50px;width:600px;text-align:right;margin-right:-0.3px;">Eng. rate</div>
<div class="t" style="top:852.04px;font-size:12px;font-weight:400;color:#5f646c;letter-spacing:0.3px;left:684.20px;width:600px;text-align:right;margin-right:-0.3px;">Fill Rate</div>
<div class="b" style="left:89px;top:876.5px;width:1326px;height:1.5px;background:#e4e6ea;"></div>
<div class="b" style="left:89px;top:940px;width:1326px;height:1.5px;background:#eaecef;"></div>
<div class="b" style="left:104.0px;top:901.3px;width:16px;height:16px;border-radius:50%;background:#fdb92e;"></div>
<div class="t" style="top:904.92px;font-size:9px;font-weight:700;color:#fff;left:-188.00px;width:600px;text-align:center;">A</div>
<svg style="left:132.5px;top:896.5px" width="15" height="26" viewBox="0 0 15 26">
<rect x="1.65" y="1.55" width="11.8" height="22.3" rx="2.4" fill="none" stroke="#6b7079" stroke-width="1.7"/>
<path d="M4.2 1.5 L10.9 1.5 L10.4 3.1 Q10.2 3.7 9.6 3.7 L5.5 3.7 Q4.9 3.7 4.7 3.1 Z" fill="#6b7079"/>
<path d="M5.6 9.9 L10.4 13.35 L5.6 16.8 Z" fill="#6b7079"/>
</svg>
<div class="t" style="top:903.40px;font-size:13px;font-weight:400;color:#4a4f57;letter-spacing:0.572px;left:160.10px;-webkit-text-stroke:0.3px #4a4f57;">Control...</div>
<div class="b" style="left:104.0px;top:965.3px;width:16px;height:16px;border-radius:50%;background:#5450f0;"></div>
<div class="t" style="top:968.92px;font-size:9px;font-weight:700;color:#fff;left:-188.00px;width:600px;text-align:center;">B</div>
<svg style="left:132.5px;top:960.5px" width="15" height="26" viewBox="0 0 15 26">
<rect x="1.65" y="1.55" width="11.8" height="22.3" rx="2.4" fill="none" stroke="#6b7079" stroke-width="1.7"/>
<path d="M4.2 1.5 L10.9 1.5 L10.4 3.1 Q10.2 3.7 9.6 3.7 L5.5 3.7 Q4.9 3.7 4.7 3.1 Z" fill="#6b7079"/>
<path d="M5.6 9.9 L10.4 13.35 L5.6 16.8 Z" fill="#6b7079"/>
</svg>
<div class="t" style="top:967.20px;font-size:13px;font-weight:400;color:#4a4f57;letter-spacing:0.644px;left:160.10px;-webkit-text-stroke:0.3px #4a4f57;">Test group</div>
<div class="t" style="top:903.60px;font-size:13px;font-weight:400;color:#50555d;letter-spacing:0.15px;left:-224.30px;width:600px;text-align:right;margin-right:-0.15px;">$17.1k</div>
<div class="t" style="top:903.60px;font-size:13px;font-weight:400;color:#50555d;letter-spacing:0.15px;left:-94.70px;width:600px;text-align:right;margin-right:-0.15px;">455k</div>
<div class="t" style="top:903.60px;font-size:13px;font-weight:400;color:#50555d;letter-spacing:0.15px;left:34.90px;width:600px;text-align:right;margin-right:-0.15px;">$5.83</div>
<div class="t" style="top:903.60px;font-size:13px;font-weight:400;color:#50555d;letter-spacing:0.15px;left:161.40px;width:600px;text-align:right;margin-right:-0.15px;">0.40¢</div>
<div class="t" style="top:903.60px;font-size:13px;font-weight:400;color:#50555d;letter-spacing:0.15px;left:295.20px;width:600px;text-align:right;margin-right:-0.15px;">1.52¢</div>
<div class="t" style="top:903.60px;font-size:13px;font-weight:400;color:#50555d;letter-spacing:0.15px;left:424.50px;width:600px;text-align:right;margin-right:-0.15px;">0.69</div>
<div class="t" style="top:903.60px;font-size:13px;font-weight:400;color:#50555d;letter-spacing:0.15px;left:553.60px;width:600px;text-align:right;margin-right:-0.15px;">2.61</div>
<div class="t" style="top:903.60px;font-size:13px;font-weight:400;color:#50555d;letter-spacing:0.15px;left:683.80px;width:600px;text-align:right;margin-right:-0.15px;">92.5%</div>
<div class="t" style="top:959.30px;font-size:13px;font-weight:400;color:#50555d;letter-spacing:0.15px;left:-224.30px;width:600px;text-align:right;margin-right:-0.15px;">$13.1k</div>
<div class="t" style="top:980.09px;font-size:11px;font-weight:400;color:#e0504f;letter-spacing:0.12px;left:-224.20px;width:600px;text-align:right;margin-right:-0.12px;">-13.2%</div>
<div class="t" style="top:959.30px;font-size:13px;font-weight:400;color:#50555d;letter-spacing:0.15px;left:-94.70px;width:600px;text-align:right;margin-right:-0.15px;">462k</div>
<div class="t" style="top:980.09px;font-size:11px;font-weight:400;color:#27a06b;letter-spacing:0.12px;left:-94.60px;width:600px;text-align:right;margin-right:-0.12px;">+13.2%</div>
<div class="t" style="top:959.30px;font-size:13px;font-weight:400;color:#50555d;letter-spacing:0.15px;left:34.60px;width:600px;text-align:right;margin-right:-0.15px;">$6.11</div>
<div class="t" style="top:980.09px;font-size:11px;font-weight:400;color:#27a06b;letter-spacing:0.12px;left:34.70px;width:600px;text-align:right;margin-right:-0.12px;">+13.2%</div>
<div class="t" style="top:959.30px;font-size:13px;font-weight:400;color:#50555d;letter-spacing:0.15px;left:164.60px;width:600px;text-align:right;margin-right:-0.15px;">0.39¢</div>
<div class="t" style="top:980.09px;font-size:11px;font-weight:400;color:#e0504f;letter-spacing:0.12px;left:164.70px;width:600px;text-align:right;margin-right:-0.12px;">-13.2%</div>
<div class="t" style="top:959.30px;font-size:13px;font-weight:400;color:#50555d;letter-spacing:0.15px;left:294.60px;width:600px;text-align:right;margin-right:-0.15px;">1.32¢</div>
<div class="t" style="top:980.09px;font-size:11px;font-weight:400;color:#e0504f;letter-spacing:0.12px;left:294.70px;width:600px;text-align:right;margin-right:-0.12px;">-13.2%</div>
<div class="t" style="top:959.30px;font-size:13px;font-weight:400;color:#50555d;letter-spacing:0.15px;left:423.80px;width:600px;text-align:right;margin-right:-0.15px;">0.77</div>
<div class="t" style="top:980.09px;font-size:11px;font-weight:400;color:#27a06b;letter-spacing:0.12px;left:423.90px;width:600px;text-align:right;margin-right:-0.12px;">+13.2%</div>
<div class="t" style="top:959.30px;font-size:13px;font-weight:400;color:#50555d;letter-spacing:0.15px;left:552.90px;width:600px;text-align:right;margin-right:-0.15px;">3.21</div>
<div class="t" style="top:980.09px;font-size:11px;font-weight:400;color:#e0504f;letter-spacing:0.12px;left:553.00px;width:600px;text-align:right;margin-right:-0.12px;">-13.2%</div>
<div class="t" style="top:959.30px;font-size:13px;font-weight:400;color:#50555d;letter-spacing:0.15px;left:682.80px;width:600px;text-align:right;margin-right:-0.15px;">94.1%</div>
<div class="t" style="top:980.09px;font-size:11px;font-weight:400;color:#27a06b;letter-spacing:0.12px;left:682.90px;width:600px;text-align:right;margin-right:-0.12px;">+13.2%</div>
<div class="b" style="left:1316px;top:893.4000000000001px;width:84px;height:32.4px;border:1px solid #5f636a;border-radius:16.2px;"></div>
<div class="t" style="top:903.20px;font-size:13px;font-weight:400;color:#5b6068;letter-spacing:0.5px;left:1332.60px;-webkit-text-stroke:0.3px #5b6068;">Select A</div>
<div class="b" style="left:1315px;top:957.5px;width:85px;height:32.4px;border:1px solid #5f636a;border-radius:16.2px;"></div>
<div class="t" style="top:967.30px;font-size:13px;font-weight:400;color:#5b6068;letter-spacing:0.4px;left:1331.80px;-webkit-text-stroke:0.3px #5b6068;">Select B</div>
<div class="b" style="left:913px;top:403.3px;width:172px;height:64.2px;background:#41454e;border-radius:7px;box-shadow:0 4px 10px rgba(0,0,0,0.16);"></div>
<svg style="left:989px;top:467px" width="20" height="7" viewBox="0 0 20 7"><path d="M0 0 L20 0 L10 6 Z" fill="#41454e"/></svg>
<div class="t" style="top:417.60px;font-size:13px;font-weight:400;color:#f4f4f5;letter-spacing:0.307px;left:925.00px;-webkit-text-stroke:0.35px #f4f4f5;">32 of 240 users (13.3%)</div>
<div class="t" style="top:440.74px;font-size:12px;font-weight:400;color:#e6e7e9;letter-spacing:0.25px;left:924.80px;">3 days since install</div>
<svg style="left:990px;top:478px" width="30" height="34" viewBox="0 0 30 34"><path d="M7.6 6.2 L7.6 27.4 L12.2 23.0 L15.0 30.0 L18.8 28.6 L16.0 21.4 L21.9 21.2 Z" fill="#4d5056"/></svg>
<div class="b" style="left:-4px;top:1px;width:1448px;height:911px;border:solid #2b3158;border-width:3px 4px 4px 4px;border-radius:19px;box-shadow:0 0 0 40px #e2e2e4;pointer-events:none;"></div>
<div class="b" style="left:12px;top:0;width:1420px;height:1px;background:#8f91a4;"></div>
<div class="b" style="left:14px;top:4px;width:1412px;height:1px;background:rgba(38,43,85,0.42);"></div>
<div class="b" style="left:15px;top:907px;width:1410px;height:1px;background:rgba(38,43,85,0.5);"></div>
</body></html>
